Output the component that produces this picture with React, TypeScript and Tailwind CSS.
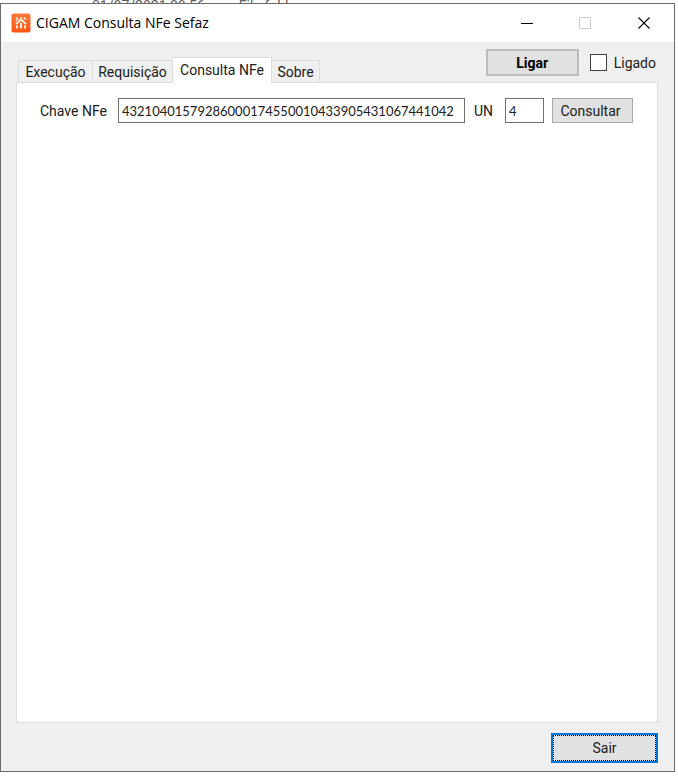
import { useState } from "react";

const tabs = [
  { name: "Execução", width: "w-[75px]" },
  { name: "Requisição", width: "w-[80px]" },
  { name: "Consulta NFe", width: "w-[99px]" },
  { name: "Sobre", width: "w-[48px]" },
];

function Logo() {
  return (
    <svg width="20" height="20" viewBox="0 0 20 20" aria-hidden="true">
      <defs>
        <linearGradient id="logo" x1="0" y1="0" x2="0" y2="1">
          <stop offset="0" stopColor="#fb7a3a" />
          <stop offset="1" stopColor="#fb5310" />
        </linearGradient>
      </defs>
      <rect x="0.5" y="0.5" width="19" height="19" rx="2" fill="url(#logo)" />
      <g stroke="#fff0e6" fill="none">
        <path d="M5 11 L10 6.6 L15 11" strokeWidth="1.9" />
        <path d="M6 12.5v3M14 12.5v3" strokeWidth="1.9" />
        <path d="M5.2 4.2l2 1.8M4.8 7.6l1.4-1.2M12.6 4.4l2.6 2.4M9.6 4.2l1.4 1.2" strokeWidth="1.4" />
        <path d="M10 10v5.5" strokeWidth="2" />
      </g>
    </svg>
  );
}

export default function App() {
  const [active, setActive] = useState("Consulta NFe");
  const [on, setOn] = useState(false);
  const [key, setKey] = useState("43210401579286000174550010433905431067441042");
  const [unit, setUnit] = useState("4");

  return (
    <div className="flex h-screen flex-col bg-white pr-[3px] pb-1 font-['Roboto','Liberation_Sans',sans-serif] text-sm text-[#202020]">
      <div className="flex h-[3px] shrink-0 items-start gap-[34px] overflow-hidden pl-[92px] text-[#606060]">
        <span className="h-3 leading-3 whitespace-nowrap">01/07/2021 08:56</span>
        <span className="h-3 leading-3 whitespace-nowrap">File folder</span>
      </div>
      <main className="flex min-h-0 flex-1 flex-col border border-[#6b6b6b] bg-[#efefef]">
        <header className="flex h-[38px] shrink-0 items-center bg-white pl-[10px] text-black">
          <Logo />
          <h1 className="ml-[5px] flex-1 font-['Open_Sans','Noto_Sans',sans-serif] text-sm font-normal">
            CIGAM Consulta NFe Sefaz
          </h1>
          <button aria-label="Minimizar" className="flex h-full w-[58px] items-center justify-center">
            <svg width="12" height="12" shapeRendering="crispEdges"><path d="M0 6.5h12" stroke="#000" /></svg>
          </button>
          <button aria-label="Maximizar" disabled className="flex h-full w-[58px] items-center justify-center">
            <svg width="12" height="12"><path d="M.5 .5h11v11h-11z" fill="none" stroke="#ccc" /></svg>
          </button>
          <button aria-label="Fechar" className="flex h-full w-[60px] items-center justify-center">
            <svg width="12" height="12"><path d="M.5 .5l11 11M11.5 .5l-11 11" stroke="#000" strokeWidth="1.1" /></svg>
          </button>
        </header>

        <div className="flex h-10 shrink-0 items-end justify-between pr-[18px] pl-[17px]">
          <div role="tablist" className="flex items-end">
            {tabs.map((t) => (
              <button
                key={t.name}
                role="tab"
                aria-selected={active === t.name}
                onClick={() => setActive(t.name)}
                className={`${t.width} border-t border-r border-[#dcdcdc] whitespace-nowrap first:border-l ${
                  active === t.name ? "z-10 -mb-px h-[26px] bg-white pb-0.5" : "h-[22px] bg-[#f0f0f0]"
                }`}
              >
                {t.name}
              </button>
            ))}
          </div>
          <div className="mb-[6px] flex items-center">
            <button className="h-[27px] w-[93px] border-2 border-[#bcbcbc] bg-[#e1e1e1] font-bold text-black">
              Ligar
            </button>
            <label className="ml-[11px] flex items-center gap-[7px]">
              <input
                type="checkbox"
                checked={on}
                onChange={(e) => setOn(e.target.checked)}
                className="size-[17px] appearance-none border border-[#404040] bg-white checked:bg-[#0078d7]"
              />
              Ligado
            </label>
          </div>
        </div>

        <section className="mr-4 ml-[15px] min-h-0 flex-1 border border-[#dcdcdc] bg-white">
          <form className="flex items-center pt-[15px] pr-6 pl-[23px]" onSubmit={(e) => e.preventDefault()}>
            <label htmlFor="chave" className="w-[78px] shrink-0 whitespace-nowrap">Chave NFe</label>
            <input
              id="chave"
              value={key}
              onChange={(e) => setKey(e.target.value)}
              className="h-[25px] min-w-0 flex-1 border border-[#707070] bg-white px-[3px] font-['Lato','Roboto',sans-serif] text-[13px] outline-none"
            />
            <label htmlFor="un" className="w-10 shrink-0 pl-[9px]">UN</label>
            <input
              id="un"
              value={unit}
              onChange={(e) => setUnit(e.target.value)}
              className="h-[25px] w-[39px] border border-[#707070] bg-white px-[3px] font-['Lato','Roboto',sans-serif] text-[13px] outline-none"
            />
            <button className="ml-2 h-[25px] w-[81px] border border-[#a8a8a8] bg-[#e1e1e1] pr-1">Consultar</button>
          </form>
        </section>

        <footer className="flex h-12 shrink-0 items-center justify-end pr-4 pt-[2px]">
          <button className="h-[30px] w-[107px] border-2 border-[#0078d7] bg-[#e1e1e1]">
            <span className="flex h-full items-center justify-center border border-dotted border-black">Sair</span>
          </button>
        </footer>
      </main>
    </div>
  );
}
